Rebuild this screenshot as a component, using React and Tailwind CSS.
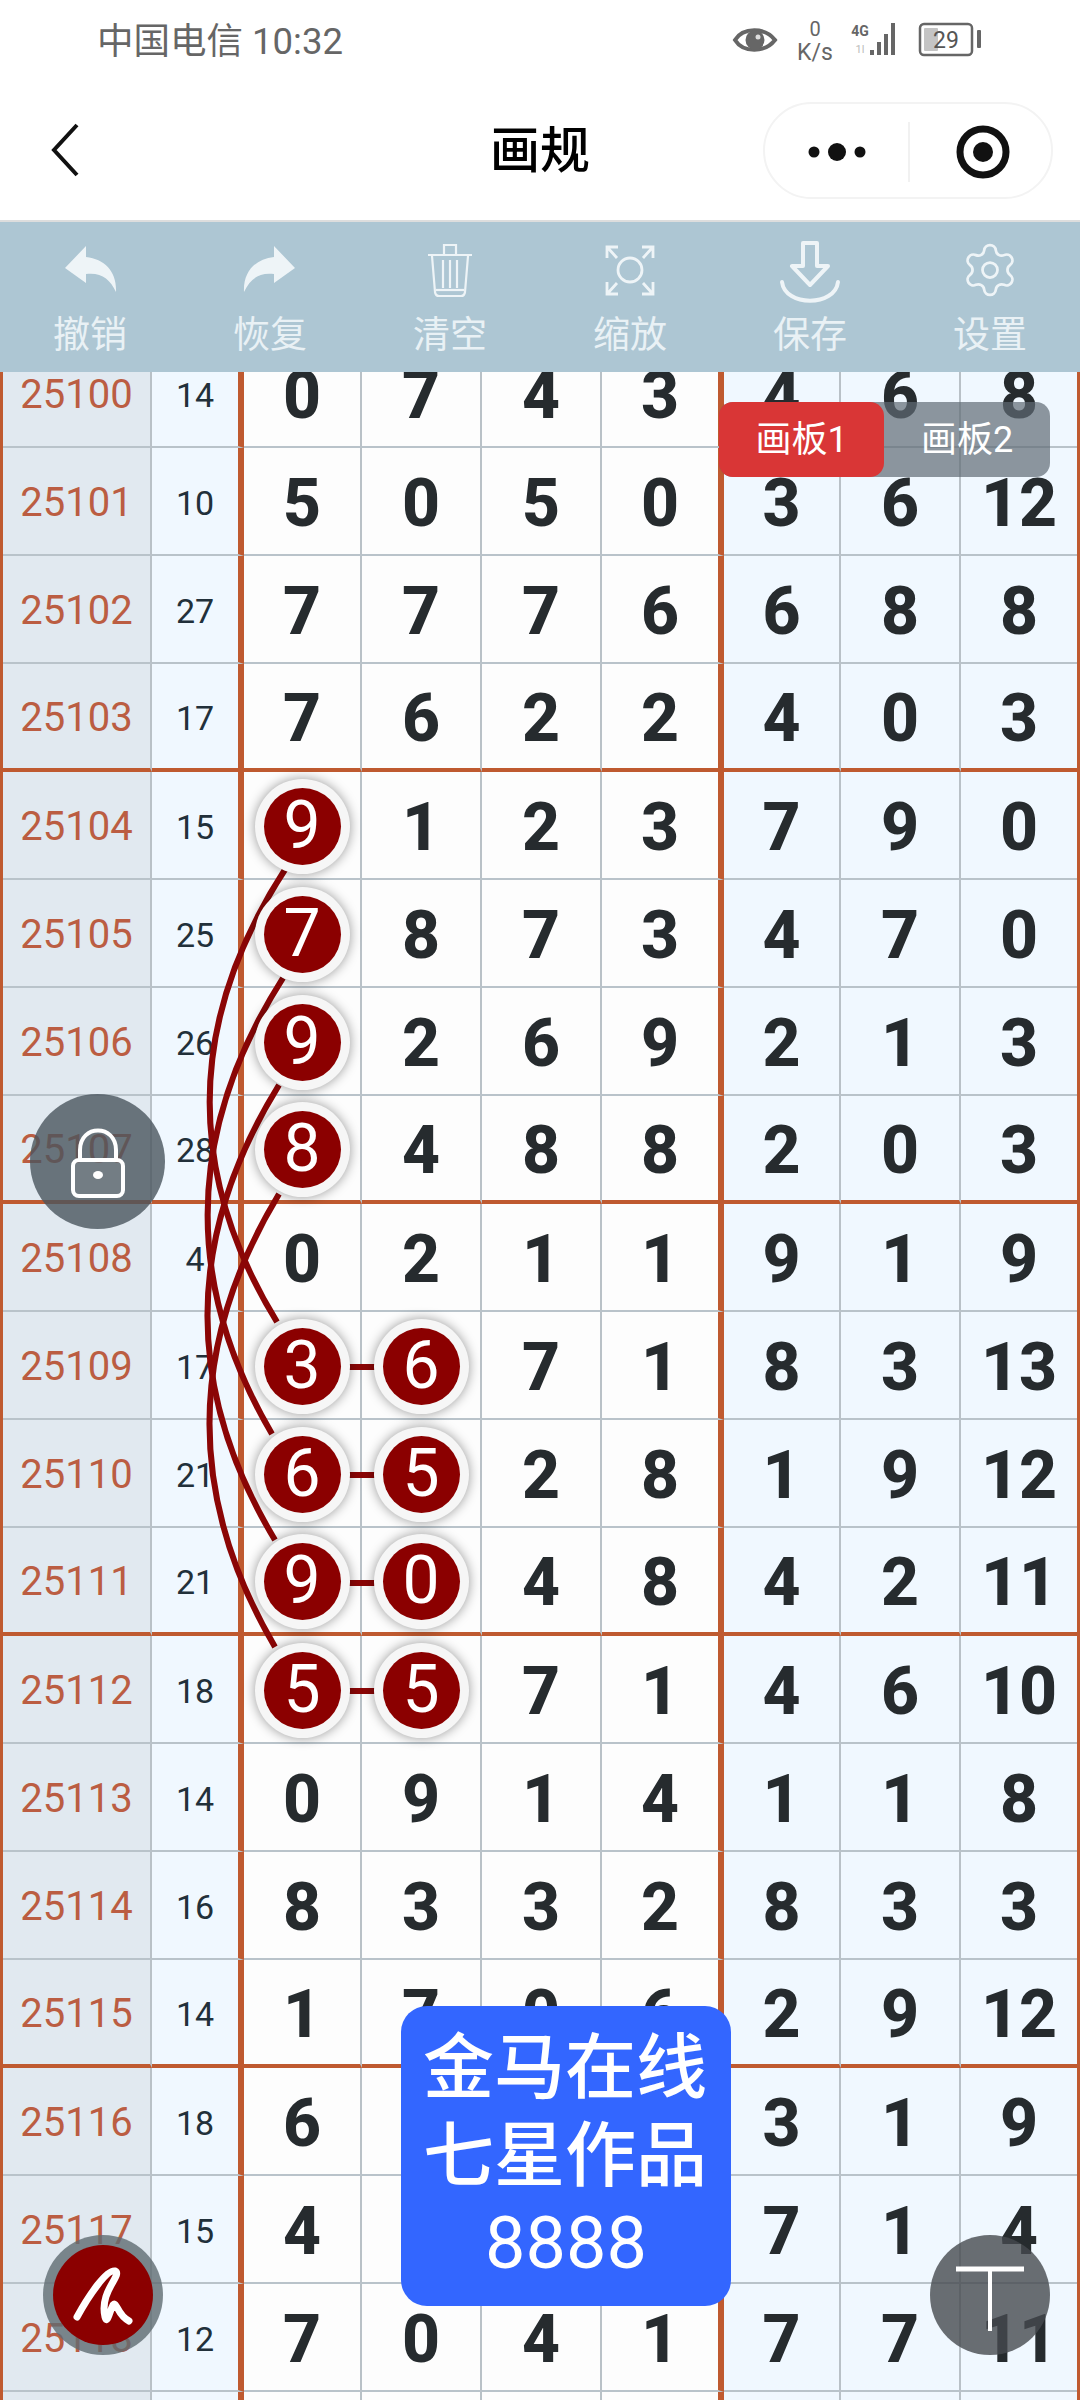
import React from "react";
import { Settings } from "lucide-react";

const FONT = { fontFamily: '"Roboto","Noto Sans CJK SC",sans-serif' };

const rows = [
  ["25100", "14", ["0", "7", "4", "3"], ["4", "6", "8"]],
  ["25101", "10", ["5", "0", "5", "0"], ["3", "6", "12"]],
  ["25102", "27", ["7", "7", "7", "6"], ["6", "8", "8"]],
  ["25103", "17", ["7", "6", "2", "2"], ["4", "0", "3"]],
  ["25104", "15", ["9*", "1", "2", "3"], ["7", "9", "0"]],
  ["25105", "25", ["7*", "8", "7", "3"], ["4", "7", "0"]],
  ["25106", "26", ["9*", "2", "6", "9"], ["2", "1", "3"]],
  ["25107", "28", ["8*", "4", "8", "8"], ["2", "0", "3"]],
  ["25108", "4", ["0", "2", "1", "1"], ["9", "1", "9"]],
  ["25109", "17", ["3*", "6*", "7", "1"], ["8", "3", "13"]],
  ["25110", "21", ["6*", "5*", "2", "8"], ["1", "9", "12"]],
  ["25111", "21", ["9*", "0*", "4", "8"], ["4", "2", "11"]],
  ["25112", "18", ["5*", "5*", "7", "1"], ["4", "6", "10"]],
  ["25113", "14", ["0", "9", "1", "4"], ["1", "1", "8"]],
  ["25114", "16", ["8", "3", "3", "2"], ["8", "3", "3"]],
  ["25115", "14", ["1", "7", "0", "6"], ["2", "9", "12"]],
  ["25116", "18", ["6", "2", "5", "8"], ["3", "1", "9"]],
  ["25117", "15", ["4", "3", "9", "2"], ["7", "1", "4"]],
  ["25118", "12", ["7", "0", "4", "1"], ["7", "7", "11"]],
  ["25119", "16", ["3", "1", "6", "6"], ["5", "2", "8"]],
];

function Cell({ thick, bg, divider, children }) {
  return (
    <div
      className={`flex items-center justify-center min-w-0 pt-[2px] ${bg} ${divider === "orange" ? "border-r-[6px] border-r-[#bf5a30]" : divider === "none" ? "" : "border-r-2 border-r-[#b9c1c7]"} ${thick ? "border-b-4 border-b-[#bf5a30]" : "border-b-2 border-b-[#b9c3ca]"}`}
    >
      {children}
    </div>
  );
}

function Digit({ value }) {
  if (value.endsWith("*")) {
    return (
      <div className="relative z-10 flex items-center justify-center w-[95px] h-[95px] shrink-0 rounded-full bg-[#f6f6f6] shadow-[0_0_12px_rgba(0,0,0,0.4)]">
        <div className="flex items-center justify-center w-[77px] h-[77px] rounded-full bg-[#8b0000] text-white text-[66px] leading-none font-normal">
          {value[0]}
        </div>
      </div>
    );
  }
  return <span className="mt-[4px] text-[66px] leading-none font-extrabold text-[#262b2e]">{value}</span>;
}

function Row({ row, index }) {
  const thick = index % 4 === 3;
  const [id, sum, mid, right] = row;
  return (
    <div className="grid grid-cols-[149px_92px_118px_120px_120px_122px_117px_120px_116px] h-[108px] border-l-[3px] border-r-[3px] border-l-[#bf5a30] border-r-[#bf5a30]">
      <Cell thick={thick} bg="bg-[#e1e9f0]">
        <span className="mt-[2px] text-[40px] leading-none text-[#bb5d42]">{id}</span>
      </Cell>
      <Cell thick={thick} bg="bg-[#f0f8ff]" divider="orange">
        <span className="mt-[2px] text-[34px] leading-none text-[#22303a]">{sum}</span>
      </Cell>
      {mid.map((d, i) => (
        <Cell key={i} thick={thick} bg="bg-[#fdfdfd]" divider={i === 3 ? "orange" : undefined}>
          <Digit value={d} />
        </Cell>
      ))}
      {right.map((d, i) => (
        <Cell key={i} thick={thick} bg="bg-[#f0f8ff]" divider={i === 2 ? "none" : undefined}>
          <Digit value={d} />
        </Cell>
      ))}
    </div>
  );
}

function StatusIcons() {
  return (
    <svg width="260" height="44" viewBox="0 0 260 44" className="shrink-0">
      <path d="M4 20 C12 7 34 7 44 20 C34 33 12 33 4 20 Z" fill="none" stroke="#666" strokeWidth="4" />
      <circle cx="24" cy="20" r="9.500" fill="#666" />
      <circle cx="27" cy="17" r="2.500" fill="#ddd" />
      <text x="84" y="16" fontSize="20" fill="#666" textAnchor="middle">0</text>
      <text x="84" y="40" fontSize="23" fill="#666" textAnchor="middle">K/s</text>
      <text x="129" y="16" fontSize="14" fontWeight="700" fill="#666" textAnchor="middle">4G</text>
      <text x="129" y="33" fontSize="11" fill="#bbb" textAnchor="middle">1l</text>
      <rect x="139" y="30" width="4" height="5" fill="#666" />
      <rect x="146" y="22" width="4" height="13" fill="#666" />
      <rect x="153" y="14" width="4" height="21" fill="#666" />
      <rect x="160" y="3" width="4" height="32" fill="#666" />
      <rect x="189" y="4" width="52" height="31" rx="4" fill="none" stroke="#666" strokeWidth="2.500" />
      <rect x="193" y="8" width="14" height="23" rx="1" fill="#c4c4c4" />
      <text x="215" y="28" fontSize="23" fill="#555" textAnchor="middle">29</text>
      <rect x="246" y="10" width="4" height="18" rx="1" fill="#666" />
    </svg>
  );
}

const iconColor = "#eef4f7";

const icons = [
  <svg key="u" width="60" height="56" viewBox="0 0 60 56">
    <path d="M26 4 L5 26 L26 41 V32 C41 30 50 37 56 50 C57 30 45 17 26 15 Z" fill={iconColor} />
  </svg>,
  <svg key="r" width="60" height="56" viewBox="0 0 60 56">
    <path d="M34 4 L55 26 L34 41 V32 C19 30 10 37 4 50 C3 30 15 17 34 15 Z" fill={iconColor} />
  </svg>,
  <svg key="t" width="60" height="56" viewBox="0 0 60 56" fill="none" stroke={iconColor} strokeWidth="2.200">
    <path d="M8 13 H52 M24 12 V3 H36 V12" />
    <path d="M12 14 L15 50 Q15.500 54 19 54 H41 Q44.500 54 45 50 L48 14" />
    <path d="M23 18 V46 M30 18 V46 M37 18 V46" />
    <path d="M16 48 H44" />
  </svg>,
  <svg key="s" width="60" height="56" viewBox="0 0 60 56" fill="none" stroke={iconColor} strokeWidth="2.800">
    <circle cx="30" cy="28" r="12" />
    <path d="M7 16 V5 H18 M8 6 L17 16" />
    <path d="M53 16 V5 H42 M52 6 L43 16" />
    <path d="M7 40 V52 H18 M8 51 L17 41" />
    <path d="M53 40 V52 H42 M52 51 L43 41" />
  </svg>,
  <svg key="d" width="64" height="64" viewBox="0 0 64 64" fill="none" stroke={iconColor} strokeWidth="4" strokeLinejoin="round" strokeLinecap="round" className="-mb-2 -mt-[4px]">
    <path d="M25 3 H39 V26 H50 L32 45 L14 26 H25 Z" />
    <path d="M4 42 C7 67 57 67 60 42" />
  </svg>,
  <Settings key="g" size={60} strokeWidth={1.1} color={iconColor} />,
];

const labels = ["撤销", "恢复", "清空", "缩放", "保存", "设置"];

const curves = [
  [286, 868, 1322, 277, 138],
  [283, 978, 1434, 272, 138],
  [279, 1085, 1540, 275, 138],
  [279, 1194, 1647, 275, 142],
];

export default function App() {
  return (
    <div className="relative flex flex-col w-[1080px] h-[2400px] overflow-hidden bg-white" style={FONT}>
      <div className="flex items-center justify-between h-[82px] shrink-0 pl-[97px] pr-[89px] pt-[2px]">
        <span className="text-[36.5px] leading-none text-[#666666]">中国电信 10:32</span>
        <StatusIcons />
      </div>

      <div className="relative flex items-center justify-center h-[140px] shrink-0 border-b-2 border-b-[#dddddd]">
        <svg width="30" height="54" viewBox="0 0 30 54" className="absolute left-[50px] top-[41px]" fill="none" stroke="#111" strokeWidth="4">
          <path d="M27 2 L4 27 L27 52" />
        </svg>
        <span className="text-[50px] leading-none font-medium text-black -mt-[1px]">画规</span>
        <div className="absolute left-[763px] top-[20px] flex items-center w-[290px] h-[97px] rounded-full border-2 border-[#f3f3f3]">
          <svg width="286" height="93" viewBox="0 0 286 93" className="shrink-0">
            <circle cx="49" cy="48" r="5.500" fill="#111" />
            <circle cx="72" cy="48" r="9" fill="#111" />
            <circle cx="95" cy="48" r="5.500" fill="#111" />
            <path d="M144 18 V78" stroke="#f1f1f1" strokeWidth="2" />
            <circle cx="218" cy="48" r="23" fill="none" stroke="#111" strokeWidth="7" />
            <circle cx="218" cy="48" r="10" fill="#111" />
          </svg>
        </div>
      </div>

      <div className="grid grid-cols-6 h-[150px] shrink-0 bg-[#adc6d3]">
        {labels.map((l, i) => (
          <div key={l} className="flex flex-col items-center pt-[19px]">
            <div className="flex items-center justify-center h-[58px]">{icons[i]}</div>
            <span className="mt-[18px] text-[37px] leading-none text-[#e9f1f5]">{l}</span>
          </div>
        ))}
      </div>

      <div className="flex-1 min-h-0 overflow-hidden">
        <div className="-mt-[32px]">
          {rows.map((r, i) => (
            <Row key={r[0]} row={r} index={i} />
          ))}
        </div>
      </div>

      <svg width="1080" height="2400" viewBox="0 0 1080 2400" className="absolute left-0 top-0 pointer-events-none" fill="none" stroke="#8b0606" strokeWidth="6">
        {curves.map(([x1, y1, y2, x2, cx], i) => (
          <path key={i} d={`M${x1} ${y1} Q${cx} ${(y1 + y2) / 2} ${x2} ${y2}`} />
        ))}
        {[1367, 1475, 1583, 1691].map((y) => (
          <path key={y} d={`M345 ${y} H378`} strokeWidth="6" />
        ))}
      </svg>

      <div className="absolute left-[719px] top-[402px] z-20 flex w-[331px] h-[75px] rounded-[14px] bg-[#5f6b75]/70">
        <div className="flex items-center justify-center w-[165px] rounded-[14px] bg-[#d93636] text-[36px] leading-none text-white">画板1</div>
        <div className="flex items-center justify-center flex-1 text-[36px] leading-none text-white">画板2</div>
      </div>

      <div className="absolute left-[30px] top-[1094px] z-20 flex items-center justify-center w-[135px] h-[135px] rounded-full bg-[#4a555e]/80">
        <svg width="58" height="72" viewBox="0 0 58 72" fill="none" stroke="#fff" strokeWidth="4" className="mt-[4px]">
          <path d="M11 32 V22 C11 -4 47 -4 47 22 V32" />
          <rect x="4" y="32" width="50" height="36" rx="6" fill="#8a8f94" fillOpacity="0.35" />
          <ellipse cx="29" cy="47" rx="5" ry="4" fill="#fff" stroke="none" />
        </svg>
      </div>

      <div className="absolute left-[401px] top-[2006px] z-20 flex flex-col items-center justify-center w-[330px] h-[300px] rounded-[26px] bg-[#3366ff] text-white">
        <span className="text-[71px] leading-[88px] font-medium -ml-[2px]">金马在线</span>
        <span className="text-[71px] leading-[88px] font-medium -ml-[2px]">七星作品</span>
        <span className="text-[72px] leading-[88px]">8888</span>
      </div>

      <div className="absolute left-[43px] top-[2235px] z-20 flex items-center justify-center w-[120px] h-[120px] rounded-full bg-[#5f6b72]/80">
        <div className="flex items-center justify-center w-[100px] h-[100px] rounded-full bg-[#8b0000]">
          <svg width="80" height="80" viewBox="0 0 80 80" fill="none" stroke="#fff" strokeWidth="7" strokeLinecap="round" strokeLinejoin="round">
            <path d="M14 62 C26 40 44 14 52 16 C60 20 36 36 42 62 C44 70 46 58 50 50 C54 46 54 60 66 66" />
          </svg>
        </div>
      </div>

      <div className="absolute left-[930px] top-[2235px] z-20 flex items-center justify-center w-[120px] h-[120px] rounded-full bg-[#464a4f]/80">
        <svg width="76" height="76" viewBox="0 0 76 76" fill="none" stroke="#fff">
          <path d="M4 12 H72" strokeWidth="5" />
          <path d="M38 12 V74" strokeWidth="4" />
        </svg>
      </div>
    </div>
  );
}
